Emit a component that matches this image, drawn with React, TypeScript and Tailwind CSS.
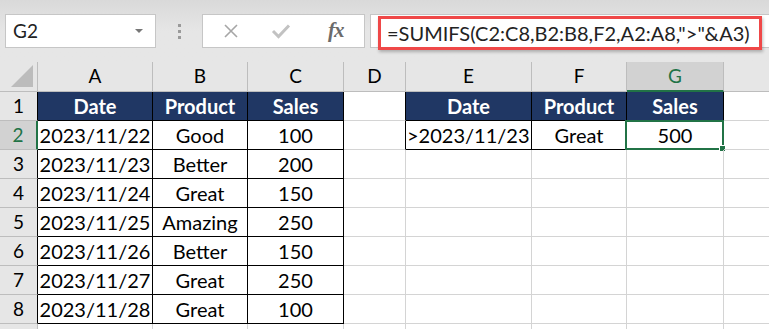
import React from 'react';

const cols = ['A', 'B', 'C', 'D', 'E', 'F', 'G', 'H'];

type Cell = { v?: string; head?: boolean; box?: boolean; align?: 'left' | 'center' };

const H = (v: string): Cell => ({ v, head: true, box: true });
const C = (v: string): Cell => ({ v, box: true });
const E: Cell = {};

const rows: Cell[][] = [
  [H('Date'), H('Product'), H('Sales'), E, H('Date'), H('Product'), H('Sales'), E],
  [C('2023/11/22'), C('Good'), C('100'), E, { v: '>2023/11/23', box: true, align: 'left' }, C('Great'), C('500'), E],
  [C('2023/11/23'), C('Better'), C('200'), E, E, E, E, E],
  [C('2023/11/24'), C('Great'), C('150'), E, E, E, E, E],
  [C('2023/11/25'), C('Amazing'), C('250'), E, E, E, E, E],
  [C('2023/11/26'), C('Better'), C('150'), E, E, E, E, E],
  [C('2023/11/27'), C('Great'), C('250'), E, E, E, E, E],
  [C('2023/11/28'), C('Great'), C('100'), E, E, E, E, E],
  [E, E, E, E, E, E, E, E],
];

function Toolbar() {
  return (
    <div className="h-[62px] bg-gradient-to-b from-[#d9d9d9] via-[#e6e6e6] to-[#e6e6e6] flex items-start pt-[14px] pl-[5px]">
      <div className="w-[151px] h-[34px] bg-white border border-[#c6c6c6] flex items-center pl-[7px] pr-[12px]">
        <span className="text-[19px] text-[#222]">G2</span>
        <span className="ml-auto w-0 h-0 border-l-[4px] border-r-[4px] border-t-[4px] border-l-transparent border-r-transparent border-t-[#777]" />
      </div>
      <div className="w-[46px] h-[34px] flex flex-col items-center justify-center gap-[3px]">
        <span className="w-[3px] h-[3px] bg-[#9a9a9a]" />
        <span className="w-[3px] h-[3px] bg-[#9a9a9a]" />
        <span className="w-[3px] h-[3px] bg-[#9a9a9a]" />
      </div>
      <div className="w-[163px] h-[34px] bg-white border border-[#c6c6c6] flex items-center">
        <svg width="16" height="16" viewBox="0 0 16 16" className="ml-[20px]">
          <path d="M2 2 L14 14 M14 2 L2 14" stroke="#a6a6a6" strokeWidth="1.6" fill="none" />
        </svg>
        <svg width="20" height="16" viewBox="0 0 20 16" className="ml-[32px]">
          <path d="M2 8 L7.5 13.5 L18 2.5" stroke="#c2c2c2" strokeWidth="3" fill="none" />
        </svg>
        <span className="ml-[37px] text-[21px] italic text-[#6b6b6b] font-['Liberation_Serif',serif] font-bold tracking-[-1px]">fx</span>
      </div>
      <div className="ml-[5px] flex-1 h-[34px] bg-white border-y border-l border-[#c6c6c6] relative">
        <div className="absolute left-[7px] top-[1px] w-[384px] h-[34px] border-[3px] border-[#ef4848] shadow-[1px_2px_3px_rgba(0,0,0,0.25)]" />
        <span className="absolute left-[16px] top-[3px] text-[20px] text-[#222] whitespace-nowrap">
          =SUMIFS(C2:C8,B2:B8,F2,A2:A8,"&gt;"&amp;A3)
        </span>
      </div>
    </div>
  );
}

export default function App() {
  return (
    <div className="w-[769px] h-[329px] overflow-hidden bg-white font-['Lato',sans-serif] text-black">
      <Toolbar />
      <div className="w-[846px] grid grid-cols-[38px_115px_95px_96px_62px_126px_95px_97px_122px] grid-rows-[30px_repeat(8,29px)_29px]">
        {/* corner */}
        <div className="bg-[#e6e6e6] border-r border-b border-[#bdbdbd] relative">
          <svg className="absolute right-[4px] bottom-[4px]" width="22" height="22" viewBox="0 0 22 22">
            <path d="M22 0 L22 22 L0 22 Z" fill="#bcbcbc" />
          </svg>
        </div>
        {cols.map((c) => (
          <div
            key={c}
            className={
              c === 'G'
                ? 'bg-[#d2d2d2] border-r border-[#bdbdbd] border-b-2 border-b-[#217346] text-[#217346] flex items-center justify-center text-[19px] pt-[1px]'
                : 'bg-[#e6e6e6] border-r border-b border-[#bdbdbd] flex items-center justify-center text-[19px]'
            }
          >
            {c}
          </div>
        ))}
        {rows.map((r, ri) => {
          const n = ri + 1;
          const inTable = n <= 8;
          return (
            <React.Fragment key={ri}>
              <div
                className={
                  n === 2
                    ? 'bg-[#d2d2d2] border-b border-[#bdbdbd] border-r-2 border-r-[#217346] text-[#217346] flex items-center justify-center text-[19px]'
                    : `bg-[#e6e6e6] border-b border-[#bdbdbd] border-r ${inTable ? 'border-r-black' : 'border-r-[#bdbdbd]'} flex items-center justify-center text-[19px]`
                }
              >
                {inTable ? n : ''}
              </div>
              {r.map((cell, ci) => {
                const col = cols[ci];
                const nextBox = r[ci + 1]?.box;
                const below = rows[ri + 1]?.[ci]?.box;
                const rightBlack = cell.box || nextBox;
                const bottomBlack = cell.box || below;
                const sel = col === 'G' && n === 2;
                return (
                  <div
                    key={col}
                    className={[
                      'relative flex items-center border-r border-b whitespace-nowrap',
                      rightBlack ? 'border-r-black' : 'border-r-[#d4d4d4]',
                      bottomBlack ? 'border-b-black' : 'border-b-[#d4d4d4]',
                      cell.head ? 'bg-[#203764] text-white font-bold' : '',
                      cell.align === 'left' ? 'justify-start pl-[1px]' : 'justify-center',
                      'text-[20px]',
                    ].join(' ')}
                  >
                    {cell.v}
                    {sel && (
                      <div className="absolute -left-[2px] -top-[1px] -right-[1px] -bottom-[1px] border-2 border-[#217346]">
                        <div className="absolute -right-[4px] -bottom-[4px] w-[7px] h-[7px] bg-[#217346] border border-white" />
                      </div>
                    )}
                  </div>
                );
              })}
            </React.Fragment>
          );
        })}
      </div>
    </div>
  );
}
